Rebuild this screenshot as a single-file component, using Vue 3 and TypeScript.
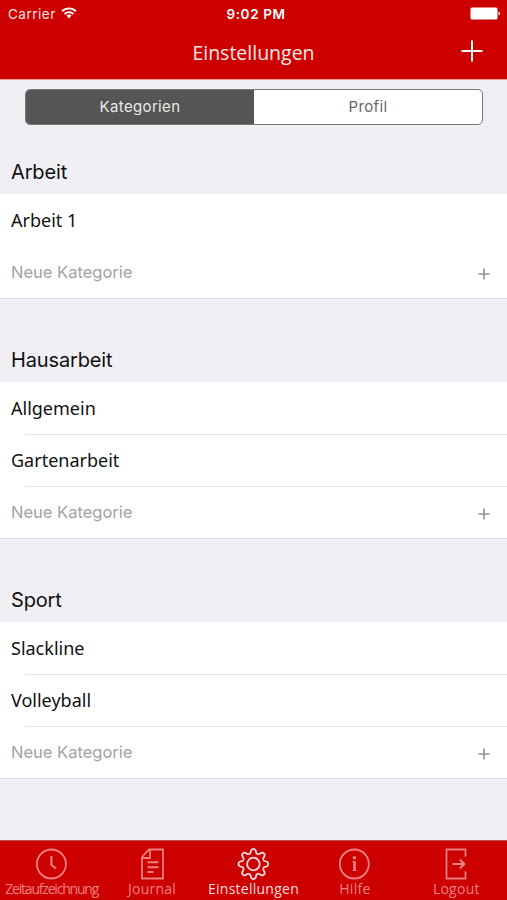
<script setup lang="ts">
import { ref } from 'vue'

interface Section {
  title: string
  entries: string[]
}

const sections: Section[] = [
  { title: 'Arbeit', entries: ['Arbeit 1'] },
  { title: 'Hausarbeit', entries: ['Allgemein', 'Gartenarbeit'] },
  { title: 'Sport', entries: ['Slackline', 'Volleyball'] },
]

const segments = ['Kategorien', 'Profil']
const activeSegment = ref('Kategorien')

const tabs = [
  { id: 'time', label: 'Zeitaufzeichnung' },
  { id: 'journal', label: 'Journal' },
  { id: 'settings', label: 'Einstellungen' },
  { id: 'help', label: 'Hilfe' },
  { id: 'logout', label: 'Logout' },
]
const activeTab = ref('settings')

// Outline of a gear with eight rounded teeth, centred on 16,16.
function gearOutline(): string {
  const points: string[] = []
  for (let i = 0; i < 192; i++) {
    const angle = (i / 192) * Math.PI * 2
    const wave = Math.tanh(1.5 * Math.cos(8 * angle)) / Math.tanh(1.5)
    const radius = 12.9 + 2 * wave
    points.push(`${(16 + radius * Math.sin(angle)).toFixed(2)} ${(16 - radius * Math.cos(angle)).toFixed(2)}`)
  }
  return `M${points.join('L')}Z`
}
const gear = gearOutline()
</script>

<template>
  <div class="screen">
    <header class="top">
      <div class="status">
        <div class="carrier">
          <span>Carrier</span>
          <svg class="wifi" width="16" height="12" viewBox="0 0 16 12" fill="none" stroke="#fff" stroke-width="1.9">
            <path d="M1 4.3C5 .4 11 .4 15 4.3M3.5 7C6.2 4.5 9.8 4.5 12.5 7" />
            <path d="M5.5 8.6Q8 6.6 10.5 8.6L8 11.4Z" fill="#fff" stroke="none" />
          </svg>
        </div>
        <span class="clock">9:02 PM</span>
        <svg class="battery" width="31" height="13" viewBox="0 0 31 13" fill="#fff">
          <rect x="0.5" y="0.5" width="27" height="12" rx="1.5" />
          <path d="M28.5 4.5Q30 5 30 6.5T28.5 8.5Z" />
        </svg>
      </div>
      <div class="nav">
        <h1>Einstellungen</h1>
        <svg class="add" width="22" height="22" viewBox="0 0 22 22" stroke="#fff" stroke-width="2">
          <path d="M11 .5V21.5M.5 11H21.5" />
        </svg>
      </div>
    </header>

    <main class="content">
      <div class="segmented">
        <button
          v-for="s in segments"
          :key="s"
          :class="{ on: s === activeSegment }"
          @click="activeSegment = s"
        >{{ s }}</button>
      </div>

      <section v-for="section in sections" :key="section.title">
        <h2>{{ section.title }}</h2>
        <ul :class="{ ruled: section.entries.length > 1 }">
          <li v-for="entry in section.entries" :key="entry"><span>{{ entry }}</span></li>
          <li class="new">
            <span>Neue Kategorie</span>
            <svg width="12" height="12" viewBox="0 0 12 12" stroke="#929292" stroke-width="1.6">
              <path d="M6 .5V11.5M.5 6H11.5" />
            </svg>
          </li>
        </ul>
      </section>
    </main>

    <nav class="tabs">
      <button
        v-for="t in tabs"
        :key="t.id"
        :class="[t.id, { active: t.id === activeTab }]"
        @click="activeTab = t.id"
      >
        <svg width="32" height="32" viewBox="0 0 32 32" fill="none" stroke="currentColor" stroke-width="1.8">
          <template v-if="t.id === 'time'">
            <circle cx="16.4" cy="16" r="14.5" />
            <path d="M16.4 8V17L21 20.5" stroke-width="2.1" />
          </template>
          <template v-else-if="t.id === 'journal'">
            <path d="M13 1.5H27V30.5H6V9Z" />
            <path d="M14 2V10H6.5" />
            <path d="M11.5 14.3H22.5M11.5 19.2H22.5M11.5 24H17.5" stroke-width="1.9" />
          </template>
          <template v-else-if="t.id === 'settings'">
            <g transform="translate(.4)">
              <path :d="gear" />
              <circle cx="16" cy="16" r="6.3" />
            </g>
          </template>
          <template v-else-if="t.id === 'help'">
            <circle cx="15.3" cy="16" r="14.5" />
            <path d="M13.4 13.6H15.5M13.6 22.5H17.6" stroke-width="1" />
            <path d="M15.5 13V23" stroke-width="2.6" />
            <circle cx="15.5" cy="9.7" r="1.8" fill="currentColor" stroke="none" />
          </template>
          <template v-else>
            <path d="M25.5 8.5V1.5H6.5V30.5H25.5V23.5" />
            <path d="M12.5 16H24.5M19.8 11.5L24.5 16L19.8 20.5" stroke-width="1.9" />
          </template>
        </svg>
        <span>{{ t.label }}</span>
      </button>
    </nav>
  </div>
</template>

<style>
body {
  margin: 0;
}
</style>

<style scoped>
.screen {
  display: flex;
  flex-direction: column;
  width: 507px;
  height: 900px;
  overflow: hidden;
  background: #efeff4;
  font-family: Inter, 'Liberation Sans', sans-serif;
  color: #111;
}
button {
  padding: 0;
  border: 0;
  background: none;
  font: inherit;
  color: inherit;
}
.top {
  box-sizing: border-box;
  flex: none;
  height: 80px;
  background: #cd0000;
  border-bottom: 1px solid #f1a0a0;
  color: #fff;
}
.status {
  display: grid;
  grid-template-columns: 1fr auto 1fr;
  align-items: center;
  height: 27px;
  padding: 0 6px 0 8px;
  font-size: 13.5px;
}
.carrier {
  display: flex;
  align-items: center;
  gap: 5px;
  letter-spacing: 0.5px;
  color: #ffe2e2;
}
.wifi {
  margin-bottom: 2px;
}
.clock {
  font-weight: 600;
  letter-spacing: 0.6px;
  padding-left: 3px;
}
.battery {
  justify-self: end;
}
.nav {
  display: grid;
  grid-template-columns: 1fr auto 1fr;
  align-items: center;
  height: 48px;
  padding: 0 24px;
}
h1 {
  grid-column: 2;
  margin: 3px 0 0;
  font: 400 19.5px/26px 'Open Sans', sans-serif;
  color: #ffe8e8;
}
.add {
  justify-self: end;
}
.segmented {
  display: grid;
  grid-template-columns: 1fr 1fr;
  box-sizing: border-box;
  height: 36px;
  margin: 9px 24px 0 25px;
  border: 1px solid #77777a;
  border-radius: 5px;
  overflow: hidden;
  background: #fff;
  font-size: 15px;
  color: #666;
}
.segmented button {
  padding-bottom: 2px;
  letter-spacing: 0.35px;
}
.segmented .on {
  background: #555;
  color: #e9e9e9;
}
section h2 {
  box-sizing: border-box;
  height: 84px;
  margin: 0;
  padding: 49px 11px 0;
  font-size: 20px;
  font-weight: 400;
  line-height: 26px;
  letter-spacing: -0.15px;
}
section:first-of-type h2 {
  height: 69px;
  padding-top: 34px;
}
ul {
  margin: 0;
  padding: 0;
  list-style: none;
  background: #fff;
  box-shadow: 0 1px #dedee1;
}
li {
  position: relative;
  display: flex;
  align-items: center;
  justify-content: space-between;
  height: 52px;
  padding: 0 17px 0 11px;
  font: 18px/26px 'Noto Sans', sans-serif;
}
.ruled li + li::before {
  content: '';
  position: absolute;
  inset: 0 0 auto 25px;
  height: 1px;
  background: #e5e5e7;
}
.new {
  font: 16.5px/26px Inter, sans-serif;
  color: #a2a2a2;
}
.new svg {
  margin-top: 3px;
}
.tabs {
  display: grid;
  grid-template-columns: repeat(5, 1fr);
  box-sizing: border-box;
  height: 60px;
  margin-top: auto;
  border-top: 1px solid #c55050;
  background: #cd0000;
}
.tabs button {
  display: flex;
  flex-direction: column;
  align-items: center;
  padding-top: 7px;
  font: 14px/18px 'Open Sans', sans-serif;
  letter-spacing: 0.25px;
  color: #f08080;
}
.tabs .active {
  color: #ffdcdc;
}
.tabs span {
  white-space: nowrap;
}
.tabs .time span {
  padding-left: 2px;
  letter-spacing: -1.2px;
}
</style>
